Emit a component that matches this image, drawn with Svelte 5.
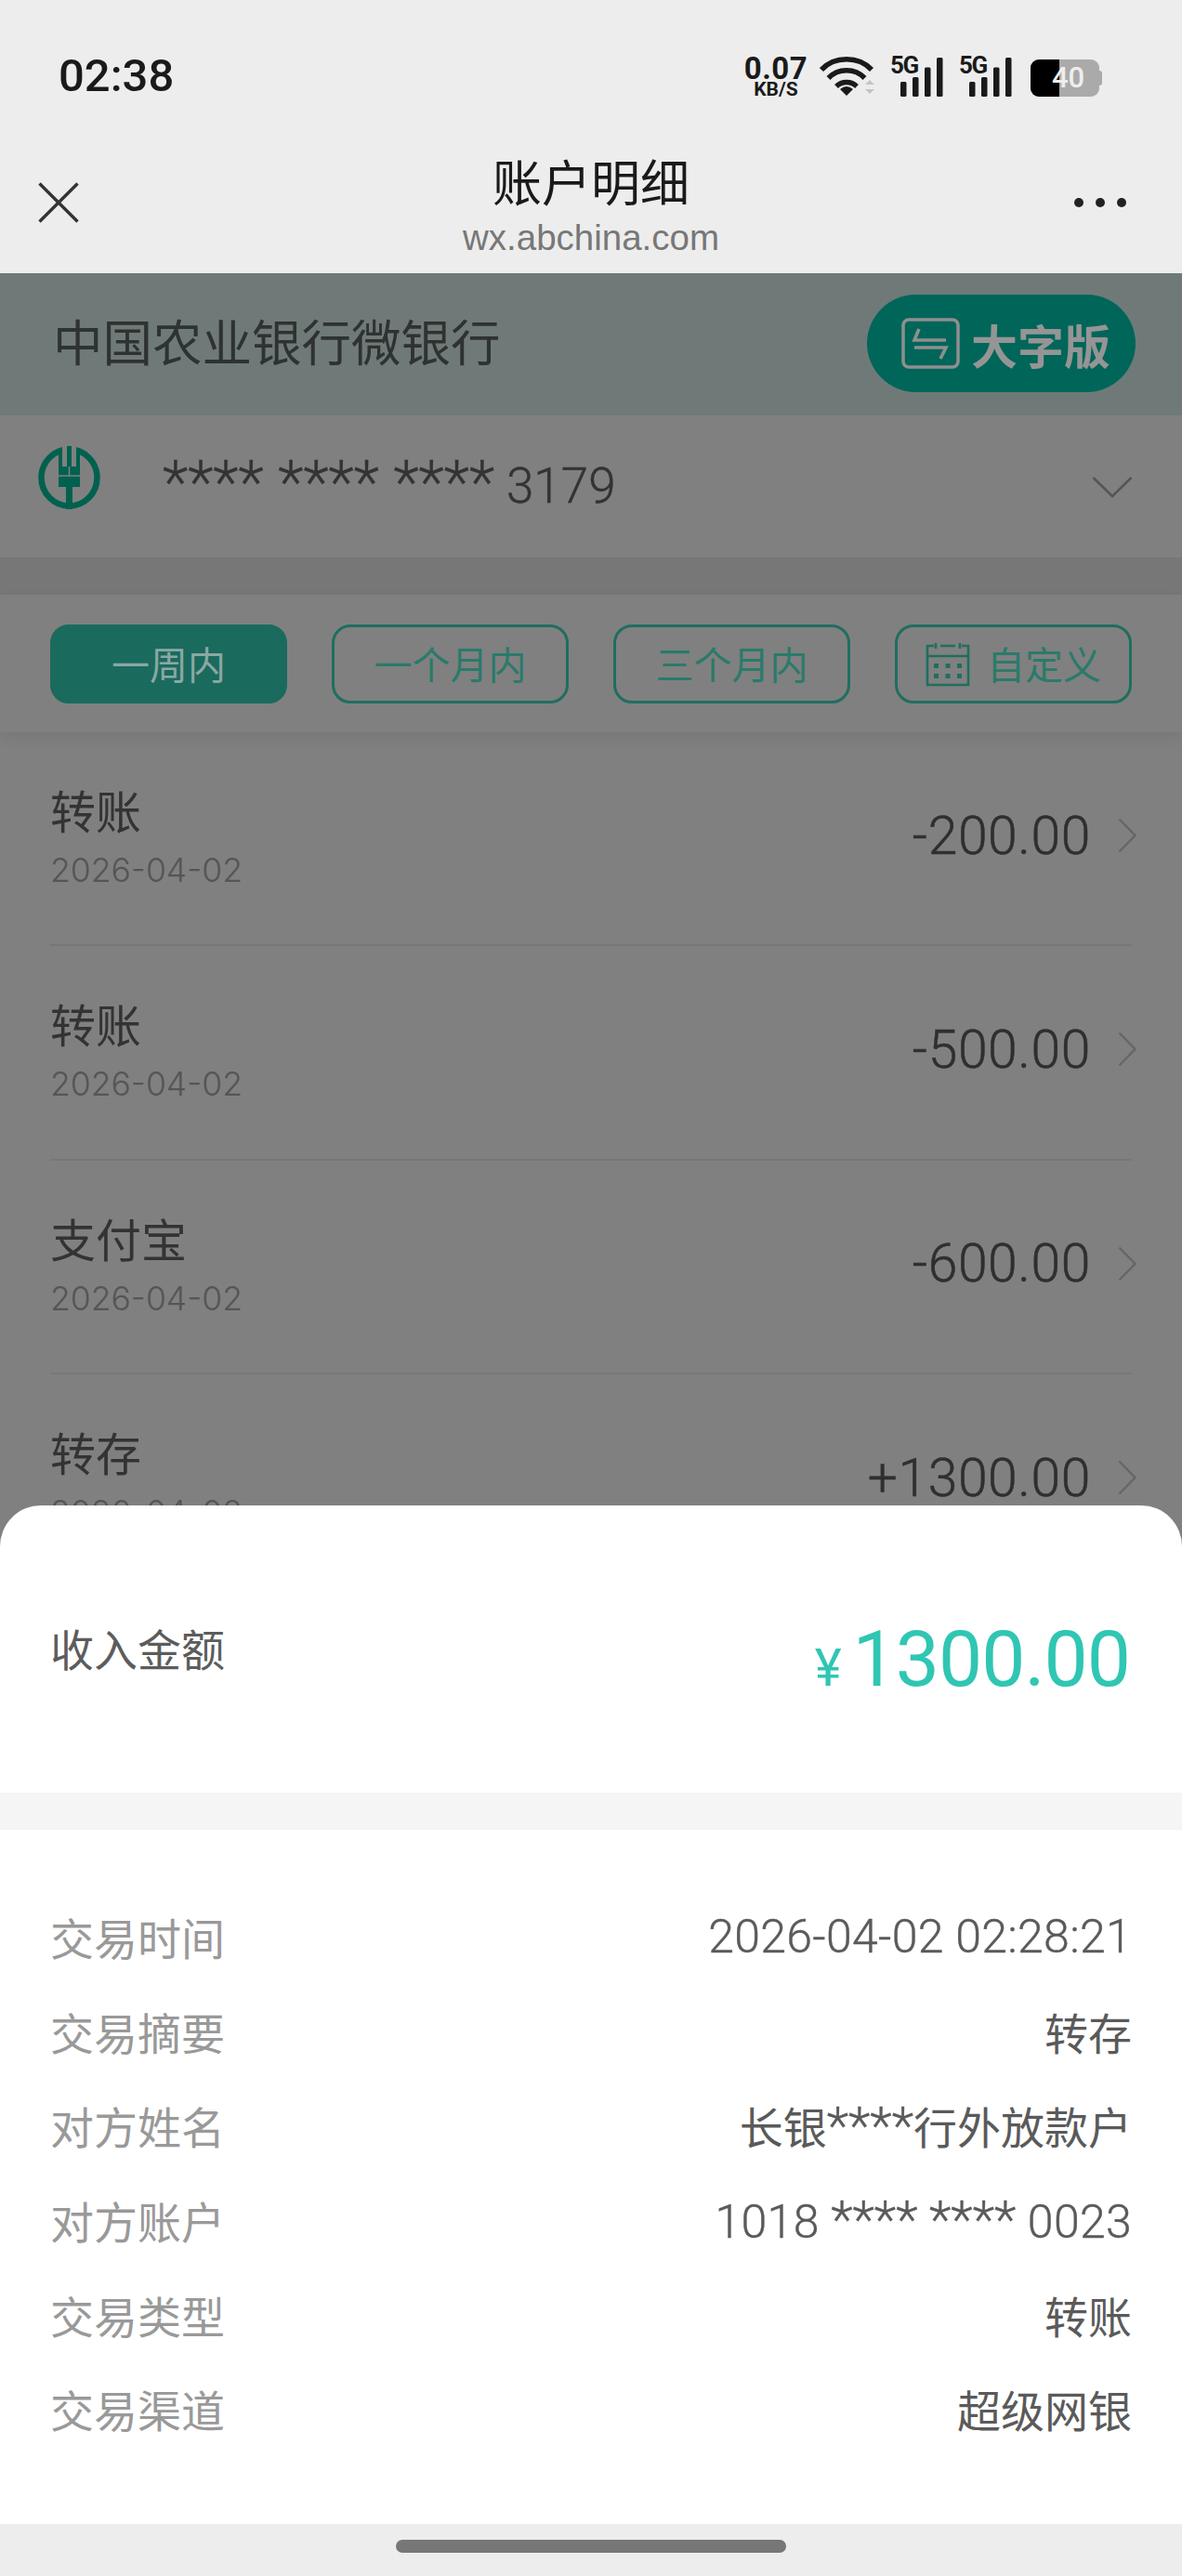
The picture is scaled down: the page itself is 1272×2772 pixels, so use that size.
<script>
  const ranges = ['一周内', '一个月内', '三个月内'];

  const rows = [
    { title: '转账', date: '2026-04-02', amount: '-200.00' },
    { title: '转账', date: '2026-04-02', amount: '-500.00' },
    { title: '支付宝', date: '2026-04-02', amount: '-600.00' },
    { title: '转存', date: '2026-04-02', amount: '+1300.00' }
  ];

  const details = [
    ['交易时间', '2026-04-02 02:28:21'],
    ['交易摘要', '转存'],
    ['对方姓名', '长银****行外放款户'],
    ['对方账户', '1018 **** **** 0023'],
    ['交易类型', '转账'],
    ['交易渠道', '超级网银']
  ];

  const bars = [
    { x: 11, y: 27, h: 16 },
    { x: 24, y: 22, h: 21 },
    { x: 37, y: 11.5, h: 31.5 },
    { x: 50, y: 1, h: 42 }
  ];

  // masks and digits are sized apart from the chinese text
  const tokens = (v) =>
    v.split(/(\*+)/).filter(Boolean).map((text) => ({
      text,
      cls: text[0] === '*' ? 'mask' : /^[\d\s:-]+$/.test(text) ? 'digit' : ''
    }));
</script>

<div class="phone">
  <!-- system status bar -->
  <div class="status">
    <span class="time">02:38</span>
    <div class="status-right">
      <div class="speed">
        <span class="speed-num">0.07</span>
        <span class="speed-unit">KB/S</span>
      </div>
      <svg class="wifi" width="62" height="44" viewBox="0 0 62 44">
        <g fill="none" stroke="#1a1a1a" stroke-width="5.5">
          <path d="M2 14 C16 -1 42 -1 56 14" />
          <path d="M9.5 23 C20 12 38 12 48.5 23" />
          <path d="M18 32 C24 26 34 26 40 32" />
        </g>
        <path d="M22 35 Q29 29 36 35 L29 42 Z" fill="#1a1a1a" />
        <path d="M49 30 L54 25 L59 30 Z M49 35 L59 35 L54 40 Z" fill="#c4c4c4" />
      </svg>
      {#each [0, 1] as s}
        <div class="signal">
          <span class="five-g">5G</span>
          <svg width="58" height="44" viewBox="0 0 58 44">
            {#each bars as b}
              <rect x={b.x} y={b.y} width="6.5" height={b.h} rx="1.5" fill="#1a1a1a" />
            {/each}
          </svg>
        </div>
      {/each}
      <div class="battery">
        <div class="battery-body">
          <div class="battery-fill"></div>
          <span class="battery-num">40</span>
        </div>
        <div class="battery-nub"></div>
      </div>
    </div>
  </div>

  <!-- webview title bar -->
  <div class="nav">
    <svg class="close" width="44" height="44" viewBox="0 0 44 44">
      <path d="M1.5 1.5 L42.5 42.5 M42.5 1.5 L1.5 42.5" stroke="#333" stroke-width="3.4" fill="none" />
    </svg>
    <div class="nav-title">
      <div class="nav-main">账户明细</div>
      <div class="nav-sub">wx.abchina.com</div>
    </div>
    <div class="dots"><i></i><i></i><i></i></div>
  </div>

  <main class="page">
    <div class="bank-head">
      <span class="bank-name">中国农业银行微银行</span>
      <div class="big-font">
        <svg width="63" height="55" viewBox="0 0 63 55" fill="none" stroke="#8f8f8f">
          <rect x="2" y="2" width="59" height="51" rx="6" stroke-width="3.5" />
          <path d="M19 12 L14 24 L48 24 M14 32 L48 32 L42 44" stroke-width="3.5" />
        </svg>
        <span>大字版</span>
      </div>
    </div>

    <div class="account">
      <svg class="logo" width="68" height="68" viewBox="0 0 68 68">
        <ellipse cx="33.5" cy="34" rx="30" ry="30.5" fill="none" stroke="#00614f" stroke-width="6.5" />
        <rect x="26" y="0" width="15" height="22" fill="#808080" />
        <path d="M24 3 V22 M43 3 V22" stroke="#00614f" stroke-width="4" />
        <rect x="31" y="0" width="5" height="22" fill="#00614f" />
        <rect x="22" y="22" width="23" height="22" fill="#00614f" />
        <path d="M22 32 H45 M33.5 22 V32" stroke="#808080" stroke-width="1.5" />
        <rect x="30" y="44" width="7" height="24" fill="#00614f" />
      </svg>
      <span class="card-no"><span class="card-mask">**** **** ****</span> 3179</span>
      <svg class="caret" width="44" height="24" viewBox="0 0 44 24">
        <path d="M1.5 2 L22 22 L42.5 2" fill="none" stroke="#555" stroke-width="2.6" />
      </svg>
    </div>

    <div class="filters">
      {#each ranges as r, i}
        <div class="chip" class:active={i === 0}>{r}</div>
      {/each}
      <div class="chip">
        <svg class="cal" width="48" height="48" viewBox="0 0 48 48" fill="none" stroke="#1f6e60" stroke-width="2.6">
          <path d="M9 4 H2 V46 H46 V4 H39 M16 4 H32" />
          <path d="M2 15 H46 M11 1 V7 M37 1 V7" />
          <g fill="#1f6e60" stroke="none">
            <rect x="9" y="23" width="5" height="5" />
            <rect x="21.5" y="23" width="5" height="5" />
            <rect x="34" y="23" width="5" height="5" />
            <rect x="9" y="34" width="5" height="5" />
            <rect x="21.5" y="34" width="5" height="5" />
            <rect x="34" y="34" width="5" height="5" />
          </g>
        </svg>
        <span>自定义</span>
      </div>
    </div>

    <div class="list">
      {#each rows as row}
        <div class="row">
          <div class="row-left">
            <div class="row-title">{row.title}</div>
            <div class="row-date">{row.date}</div>
          </div>
          <div class="row-amount">{row.amount}</div>
          <svg class="chev" width="20" height="38" viewBox="0 0 20 38">
            <path d="M1.5 1.5 L18.5 19 L1.5 36.5" fill="none" stroke="#666" stroke-width="2.4" />
          </svg>
        </div>
      {/each}
    </div>

    <!-- bottom sheet over the dimmed page -->
    <div class="sheet">
      <div class="income">
        <span class="income-label">收入金额</span>
        <div class="income-value">
          <span class="yen">¥</span>
          <span class="income-num">1300.00</span>
        </div>
      </div>
      <div class="band"></div>
      <div class="info">
        {#each details as [k, v]}
          <div class="info-row">
            <span class="info-key">{k}</span>
            <span class="info-val">
              {#each tokens(v) as t}<span class={t.cls}>{t.text}</span>{/each}
            </span>
          </div>
        {/each}
      </div>
    </div>
  </main>

  <div class="home">
    <div class="home-bar"></div>
  </div>
</div>

<style>
  :global(body) {
    margin: 0;
    background: #ededed;
  }

  * {
    box-sizing: border-box;
  }

  .phone {
    width: 1272px;
    height: 2772px;
    display: flex;
    flex-direction: column;
    overflow: hidden;
    font-family: Roboto, "Noto Sans CJK SC", sans-serif;
    background: #ededed;
  }

  .status {
    height: 130px;
    padding: 57px 86px 0 63px;
    display: flex;
    justify-content: space-between;
    align-items: flex-start;
    flex: none;
  }

  .time {
    font-size: 49px;
    line-height: 50px;
    font-weight: 500;
    color: #1a1a1a;
  }

  .status-right {
    display: flex;
    align-items: flex-start;
    height: 44px;
    margin-top: 4px;
  }

  .speed {
    width: 68px;
    display: flex;
    flex-direction: column;
    align-items: center;
    color: #1a1a1a;
    font-weight: 700;
    margin-right: 13px;
  }

  .speed-num {
    font-size: 33px;
    line-height: 26px;
    letter-spacing: 0.5px;
  }

  .speed-unit {
    font-size: 21px;
    line-height: 18px;
  }

  .wifi {
    margin-right: 14px;
  }

  .signal {
    position: relative;
    width: 58px;
    height: 44px;
    margin-right: 16px;
  }

  .signal + .battery {
    margin-left: 3px;
  }

  .five-g {
    position: absolute;
    left: 0;
    top: -4px;
    font-size: 26px;
    line-height: 26px;
    font-weight: 700;
    color: #1a1a1a;
    letter-spacing: -1.5px;
  }

  .battery {
    display: flex;
    align-items: center;
    width: 77px;
    height: 40px;
    margin-top: 3px;
  }

  .battery-body {
    position: relative;
    width: 74px;
    height: 40px;
    background: #aaa;
    border-radius: 9px;
    overflow: hidden;
  }

  .battery-nub {
    width: 3px;
    height: 16px;
    background: #aaa;
    border-radius: 0 3px 3px 0;
  }

  .battery-fill {
    width: 31px;
    height: 100%;
    background: #000;
  }

  .battery-num {
    position: absolute;
    left: 23px;
    top: 0;
    font-size: 31px;
    line-height: 40px;
    font-weight: 500;
    color: #eee;
  }

  .nav {
    height: 164px;
    padding: 0 41px;
    display: grid;
    grid-template-columns: 1fr auto 1fr;
    align-items: center;
    flex: none;
  }

  .close {
    margin-top: 12px;
  }

  .nav-title {
    text-align: center;
    margin-top: 17px;
  }

  .nav-main {
    font-size: 53px;
    line-height: 70px;
    color: #1a1a1a;
  }

  .nav-sub {
    font-family: "Liberation Sans", sans-serif;
    font-size: 38.5px;
    line-height: 44px;
    color: #777;
  }

  .dots {
    display: flex;
    gap: 13px;
    margin: 12px 19px 0 0;
    justify-content: flex-end;
  }

  .dots i {
    width: 10px;
    height: 10px;
    border-radius: 50%;
    background: #222;
  }

  .page {
    flex: 1;
    position: relative;
    overflow: hidden;
    background: #808080;
  }

  .bank-head {
    height: 153px;
    padding: 0 50px 0 57px;
    display: flex;
    align-items: center;
    justify-content: space-between;
    background: #6f7a78;
  }

  .bank-name {
    font-size: 53.5px;
    color: #2e3231;
    margin-top: -10px;
  }

  .big-font {
    width: 289px;
    height: 105px;
    padding-left: 37px;
    display: flex;
    align-items: center;
    gap: 12px;
    border-radius: 53px;
    background: #00665a;
    color: #959595;
    font-size: 50px;
    font-weight: 700;
    margin-top: -2px;
  }

  .account {
    height: 193px;
    padding: 0 53px 0 41px;
    display: flex;
    align-items: center;
    background: #808080;
    border-bottom: 40px solid #777;
  }

  .logo {
    flex: none;
    margin-top: -19px;
  }

  .card-no {
    margin-left: 66px;
    font-size: 53px;
    font-weight: 300;
    -webkit-text-stroke: 0.4px #333;
    color: #333;
    flex: 1;
    margin-top: -8px;
  }

  .card-mask {
    font-size: 64px;
  }

  .filters {
    height: 148px;
    padding: 32px 54px 0;
    display: flex;
    justify-content: space-between;
    align-items: flex-start;
    box-shadow: 0 6px 14px rgba(0, 0, 0, 0.07);
    position: relative;
  }

  .chip {
    width: 255px;
    height: 85px;
    padding-bottom: 4px;
    display: flex;
    align-items: center;
    justify-content: center;
    border: 3px solid #1f6e60;
    border-radius: 20px;
    font-size: 41px;
    color: #2a7a6b;
  }

  .chip.active {
    background: #1b6a5e;
    border-color: #1b6a5e;
    color: #8aa8a2;
  }

  .cal {
    margin-right: 18px;
    margin-top: 4px;
  }

  .list {
    padding: 0 54px;
  }

  .row {
    height: 230.3px;
    display: flex;
    align-items: center;
    border-bottom: 2px solid #777;
  }

  .row-left {
    flex: 1;
  }

  .row-title {
    font-size: 49px;
    line-height: 66px;
    color: #333;
  }

  .row-date {
    font-family: Inter, sans-serif;
    font-size: 35.5px;
    line-height: 48px;
    font-weight: 300;
    color: #555;
    margin-top: 4px;
  }

  .row-amount {
    font-size: 57px;
    font-weight: 300;
    -webkit-text-stroke: 0.5px #2f2f2f;
    letter-spacing: 0.6px;
    color: #2f2f2f;
    margin-top: -6px;
  }

  .chev {
    margin-left: 29px;
    margin-right: -5px;
    margin-top: -6px;
  }

  .sheet {
    position: absolute;
    left: 0;
    right: 0;
    bottom: 0;
    height: 1096px;
    border-radius: 44px 44px 0 0;
    background: #fff;
    overflow: hidden;
  }

  .income {
    height: 309px;
    padding: 0 56px 0 54px;
    display: flex;
    align-items: center;
    justify-content: space-between;
  }

  .income-label {
    font-size: 47px;
    color: #5c5c5c;
    margin-top: -4px;
  }

  .income-value {
    display: flex;
    align-items: baseline;
    color: #2fc6b3;
    margin-top: 22px;
  }

  .yen {
    font-size: 55px;
    margin-right: 12px;
  }

  .income-num {
    font-size: 84px;
    letter-spacing: -1px;
  }

  .band {
    height: 40px;
    background: #f5f5f5;
  }

  .info {
    padding: 64px 54px 0;
  }

  .info-row {
    height: 101.6px;
    display: flex;
    align-items: center;
    justify-content: space-between;
    font-size: 47px;
  }

  .info-key {
    color: #999;
  }

  .info-val {
    color: #5a5a5a;
  }

  .digit {
    font-size: 50px;
    font-weight: 300;
    -webkit-text-stroke: 0.4px #5a5a5a;
    letter-spacing: 0.3px;
  }

  .mask {
    font-size: 55px;
    font-weight: 300;
    -webkit-text-stroke: 0.4px #5a5a5a;
  }

  .home {
    height: 56px;
    flex: none;
    display: flex;
    justify-content: center;
    padding-top: 17px;
    background: #ededed;
  }

  .home-bar {
    width: 420px;
    height: 14px;
    border-radius: 7px;
    background: #777;
  }
</style>
